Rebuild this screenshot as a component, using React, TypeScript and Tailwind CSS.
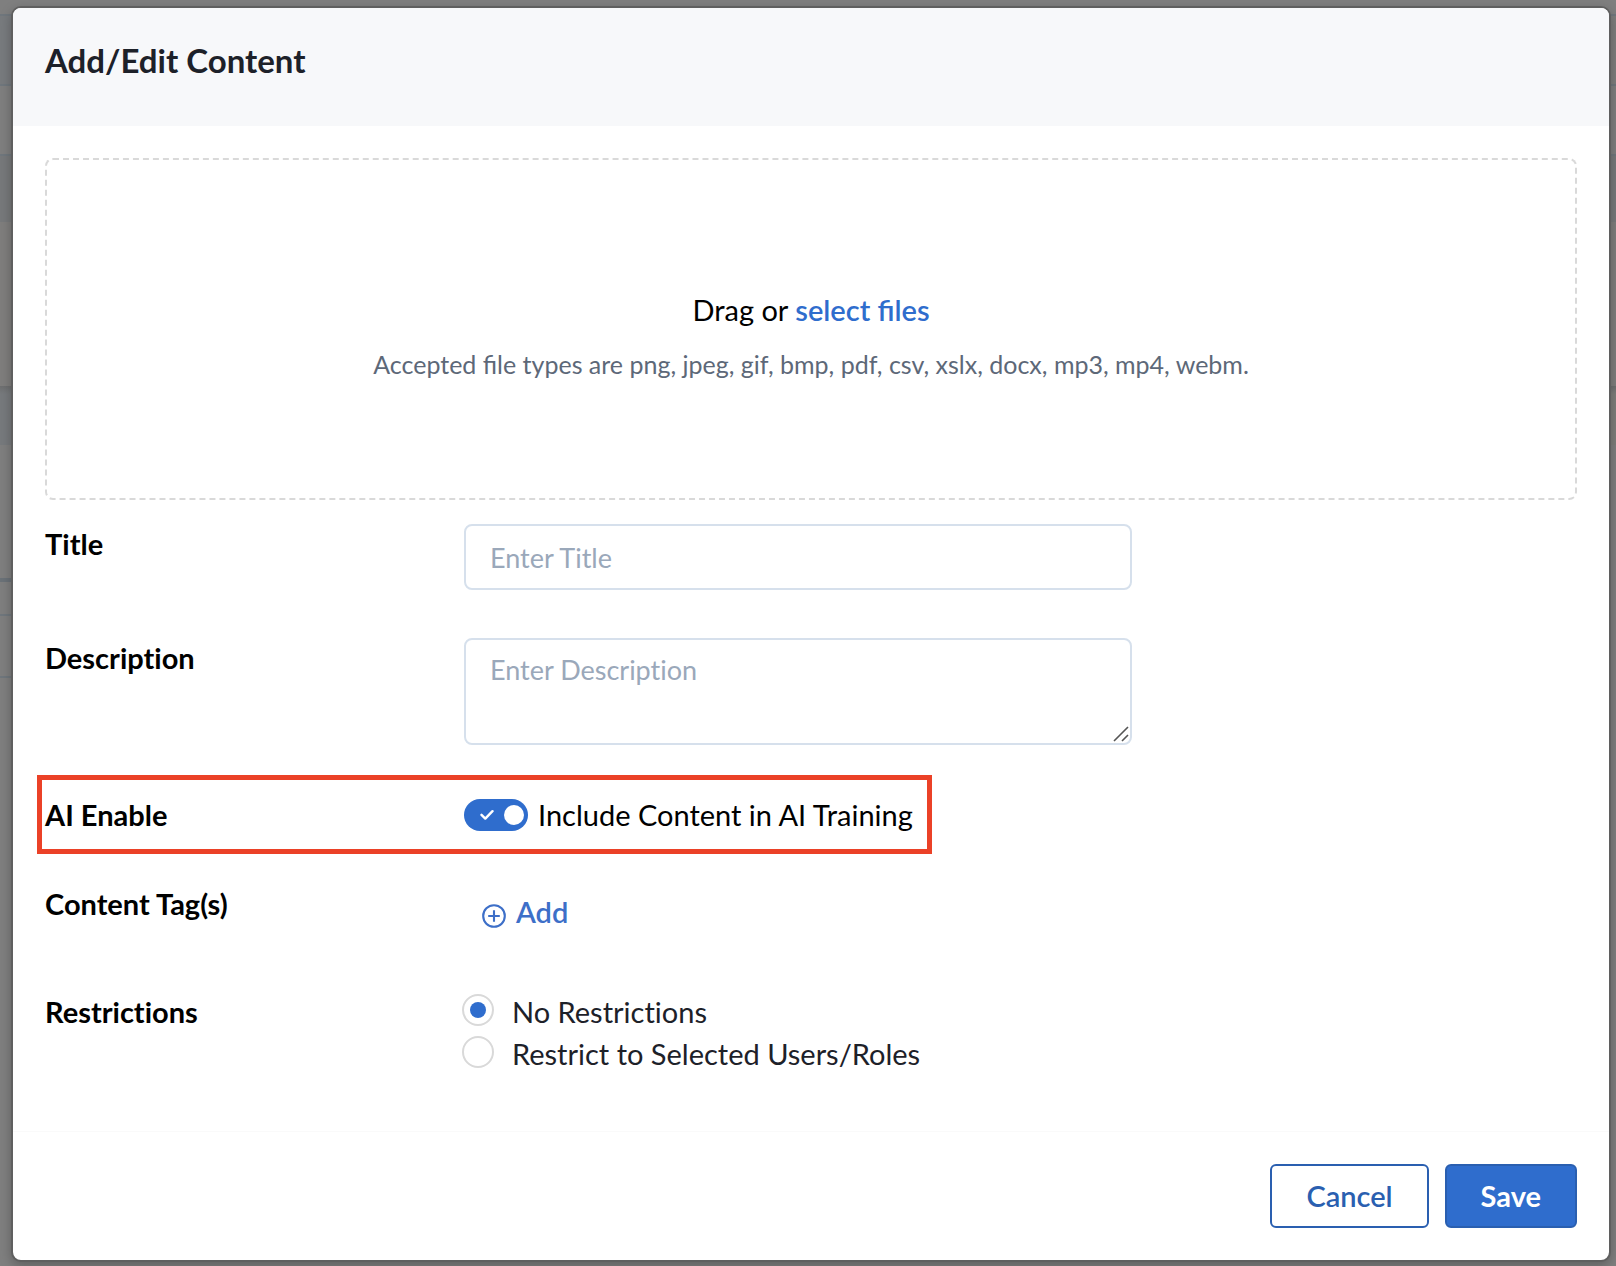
import { useState, type ReactNode } from "react";

interface FieldRowProps {
  label: string;
  htmlFor?: string;
  className?: string;
  children: ReactNode;
}

const LABEL = "pt-0.5 text-[29px] leading-9 font-bold text-black";

function FieldRow({ label, htmlFor, className = "", children }: FieldRowProps) {
  return (
    <div className={`grid grid-cols-[419px_minmax(0,1fr)] items-start ${className}`}>
      <label htmlFor={htmlFor} className={LABEL}>{label}</label>
      {children}
    </div>
  );
}

// Dimmed page that shows around the edges of the dialog.
function Backdrop() {
  return (
    <div aria-hidden="true" className="absolute inset-0 flex flex-col bg-[#7f7f7f]">
      <div className="h-4 border-b-2 border-[#70777d]" />
      <div className="h-[70px] border-b-2 border-[#70777d] bg-linear-to-r from-[#787b7e] to-[#7e7e7d]" />
      <div className="h-[70px] border-b-2 border-[#70777d]" />
      <div className="h-[66px] bg-[#77797b]" />
      <div className="h-[164px] bg-[#7f7e7d]" />
      <div className="h-[59px] bg-linear-to-r from-[#777a7d] to-[#7e7e7b]">
        <div className="h-2 bg-linear-to-b from-[#6e6f70] to-transparent" />
      </div>
      <div className="flex">
        <div className="w-1/2">
          <div className="h-[137px] border-b-4 border-[#6b7278]" />
          <div className="h-[34px] border-b-2 border-[#70777d]" />
          <div className="h-[62px] border-b-2 border-[#70777d]" />
        </div>
      </div>
    </div>
  );
}

function AiToggle({ checked, onChange }: { checked: boolean; onChange: (v: boolean) => void }) {
  return (
    <label className="flex items-center gap-2.5 text-[29px] leading-9 text-black cursor-pointer">
      <span className="relative flex h-8 w-16 shrink-0">
        <input
          id="ai-enable"
          type="checkbox"
          role="switch"
          checked={checked}
          onChange={(e) => onChange(e.target.checked)}
          className="peer h-8 w-16 appearance-none rounded-full bg-gray-400 checked:bg-[#2f6dcd] cursor-pointer"
        />
        <span className="pointer-events-none absolute top-1.5 left-1 h-5 w-5 rounded-full bg-white peer-checked:left-10" />
        {checked && (
          <svg className="pointer-events-none absolute top-2.5 left-4" width="14" height="12" viewBox="0 0 14 12" fill="none">
            <path d="M1.5 5.8L5.3 9.6L12.5 2.2" stroke="#fff" strokeWidth="2.4" strokeLinecap="round" strokeLinejoin="round" />
          </svg>
        )}
      </span>
      Include Content in AI Training
    </label>
  );
}

const RESTRICTIONS = [
  { value: "none", label: "No Restrictions" },
  { value: "selected", label: "Restrict to Selected Users/Roles" },
];

const INPUT = "block w-full rounded-lg border-2 border-[#d6e0ec] bg-white px-6 text-[27px] leading-8 text-black placeholder:text-[#9aa8ba] outline-none";

export default function App() {
  const [aiEnabled, setAiEnabled] = useState(true);
  const [restriction, setRestriction] = useState("none");

  return (
    <div className="relative flex min-h-screen flex-col bg-[#7f7f7f] pt-1.5 pr-[5px] pb-1 pl-[11px] font-['Lato','Open_Sans',sans-serif] [font-variant-ligatures:none]">
      <Backdrop />

      <form
        role="dialog"
        aria-labelledby="dialog-title"
        onSubmit={(e) => e.preventDefault()}
        className="relative flex flex-1 flex-col overflow-hidden rounded-[10px] border-2 border-[#5f5f5f] bg-white shadow-[0_4px_12px_rgba(0,0,0,0.25)]"
      >
        <header className="h-[118px] bg-[#f7f8fa] px-8 pt-8">
          <h1 id="dialog-title" className="text-[33px] leading-10 font-bold text-[#1d2129]">Add/Edit Content</h1>
        </header>

        <div className="flex-1 px-8 pt-8">
          <div className="flex h-[342px] flex-col items-center justify-center gap-[18px] rounded-lg border-2 border-dashed border-[#d9d9d9] pt-4 text-center [font-variant-ligatures:normal]">
            <p className="text-[29px] leading-9 text-black">
              Drag or{" "}
              <button type="button" className="font-semibold text-[#2f6dcd] cursor-pointer">select files</button>
            </p>
            <p className="text-[25px] leading-9 text-[#5d6878]">
              Accepted file types are png, jpeg, gif, bmp, pdf, csv, xslx, docx, mp3, mp4, webm.
            </p>
          </div>

          <FieldRow label="Title" htmlFor="title" className="mt-6">
            <div className="max-w-[668px]">
              <input id="title" type="text" placeholder="Enter Title" className={`h-[66px] ${INPUT}`} />
            </div>
          </FieldRow>

          <FieldRow label="Description" htmlFor="description" className="mt-12">
            <div className="relative max-w-[668px]">
              <textarea id="description" placeholder="Enter Description" className={`h-[107px] resize-none py-3.5 ${INPUT}`} />
              <svg className="pointer-events-none absolute right-[3px] bottom-[3px]" width="16" height="16" viewBox="0 0 16 16" fill="none">
                <path d="M1 15L15 1M9 15L15 9" stroke="#555" strokeWidth="1.6" />
              </svg>
            </div>
          </FieldRow>

          <div className="mt-[30px] -ml-2 grid h-[79px] w-fit grid-cols-[419px_auto] items-center border-5 border-[#eb4127] pr-3.5 pl-[3px]">
            <label htmlFor="ai-enable" className="text-[29px] leading-9 font-bold text-black">AI Enable</label>
            <AiToggle checked={aiEnabled} onChange={setAiEnabled} />
          </div>

          <FieldRow label="Content Tag(s)" htmlFor="add-tag" className="mt-[30px]">
            <button id="add-tag" type="button" className="mt-2.5 ml-[18px] flex w-fit items-center gap-2.5 text-[29px] leading-9 font-semibold text-[#3d6fc8] cursor-pointer">
              <svg className="mt-2" width="24" height="24" viewBox="0 0 24 24" fill="none" stroke="currentColor" strokeWidth="2.1">
                <circle cx="12" cy="12" r="10.8" />
                <path d="M12 6.2V17.8M6.2 12H17.8" />
              </svg>
              Add
            </button>
          </FieldRow>

          <fieldset className="mt-[62px] grid grid-cols-[419px_minmax(0,1fr)] items-start" aria-labelledby="restrictions-label">
            <span id="restrictions-label" className={LABEL}>Restrictions</span>
            <div className="-ml-0.5 flex flex-col gap-1.5 pt-0.5">
              {RESTRICTIONS.map((r) => (
                <label key={r.value} className="flex w-fit items-start gap-[18px] text-[29px] leading-9 text-[#1d2129] cursor-pointer">
                  <input
                    type="radio"
                    name="restriction"
                    value={r.value}
                    checked={restriction === r.value}
                    onChange={() => setRestriction(r.value)}
                    className="grid h-8 w-8 shrink-0 appearance-none place-items-center rounded-full border-2 border-[#d9d9d9] bg-white before:h-4 before:w-4 before:rounded-full checked:before:bg-[#2f6dcd] cursor-pointer"
                  />
                  {r.label}
                </label>
              ))}
            </div>
          </fieldset>
        </div>

        <footer className="flex justify-end gap-4 border-t border-[#fafafa] p-8">
          <button type="button" className="h-16 rounded-md border-2 border-[#2a5fb0] bg-white px-[34px] text-[29px] leading-9 font-semibold text-[#2a5fb0] cursor-pointer">
            Cancel
          </button>
          <button type="submit" className="h-16 rounded-md border-2 border-[#2a5fb0] bg-[#2f6dcd] px-[34px] text-[29px] leading-9 font-bold text-white cursor-pointer">
            Save
          </button>
        </footer>
      </form>
    </div>
  );
}
